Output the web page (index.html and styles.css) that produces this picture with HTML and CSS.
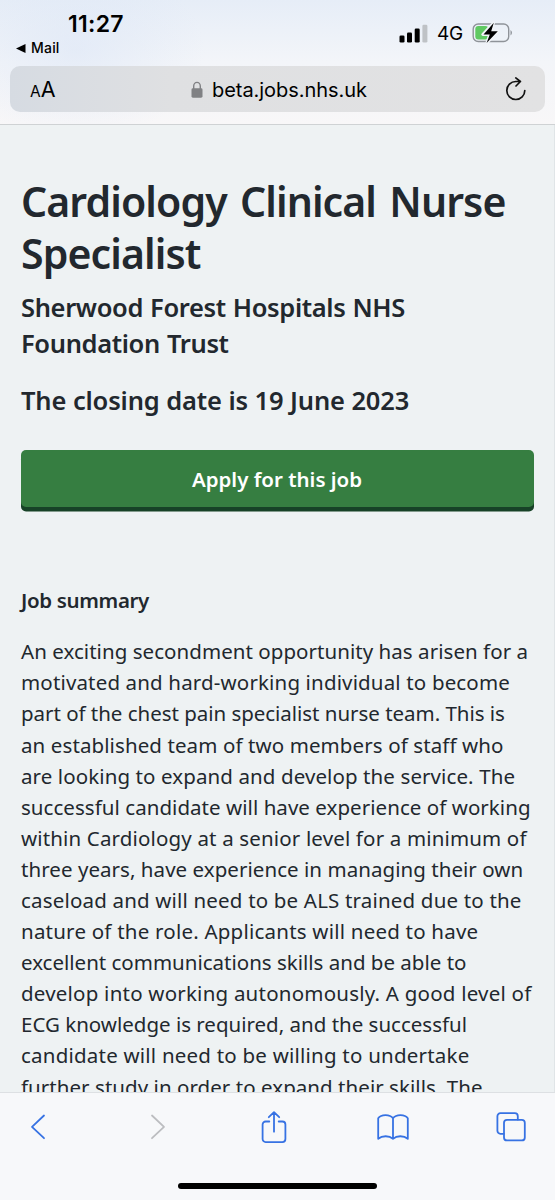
FILE: index.html
```html
<!DOCTYPE html>
<html lang="en">
<head>
<meta charset="utf-8">
<title>Cardiology Clinical Nurse Specialist</title>
<link rel="stylesheet" href="styles.css">
</head>
<body>
<div class="phone">
  <header class="chrome">
    <div class="status">
      <div class="status-left">
        <span class="clock">11:27</span>
        <span class="back-app"><svg width="10" height="9" viewBox="0 0 10 9"><path d="M0 4.5 9.5 0v9z"/></svg><span class="mail">Mail</span></span>
      </div>
      <div class="status-right">
        <svg class="signal" width="30" height="20" viewBox="0 0 30 20"><rect x="0.5" y="12.5" width="5" height="7" rx="1.3"/><rect x="8" y="9.5" width="5" height="10" rx="1.3"/><rect x="15.7" y="5.5" width="5" height="14" rx="1.3"/><rect x="23.4" y="1.8" width="5" height="17.7" rx="1.3" fill="#bfc2c6"/></svg>
        <span class="network">4G</span>
        <svg class="battery" width="42" height="24" viewBox="0 0 42 24"><rect x="1.2" y="3" width="35.5" height="17.5" rx="5" fill="none" stroke="#8f9399" stroke-width="1.4"/><path d="M38.5 9q3 2.7 0 5.6z" fill="#8f9399"/><rect x="3.3" y="5.1" width="13" height="13.3" rx="3" fill="#5fc962"/><path d="M21.5 2 10.8 13.5h7l-2.9 8.2L26 10.1h-7z" stroke="#f1f4f8" stroke-width="3" stroke-linejoin="round"/><path d="M21.8 1.8 11.5 13.5h6.3l-3.2 8.6L25.8 10.2H19.2z"/></svg>
      </div>
    </div>
    <div class="address">
      <span class="text-size"><span class="small-a">A</span>A</span>
      <div class="site"><svg width="12" height="18" viewBox="0 0 12 18"><path d="M2.7 8V5a3.3 3.6 0 0 1 6.6 0v3" fill="none" stroke="#808184" stroke-width="1.4"/><rect x="0.5" y="7.3" width="11" height="9.4" rx="1.4" fill="#808184"/></svg><span class="url">beta.jobs.nhs.uk</span></div>
      <svg class="reload" width="22" height="25" viewBox="0 0 22 25" fill="none" stroke="#111" stroke-width="1.7" stroke-linecap="round" stroke-linejoin="round"><path d="M19.8 13.5a9 9 0 1 1-9-9h4.6M10.8 0.9l4.6 3.6-4.4 4.5"/></svg>
    </div>
  </header>
  <main class="page">
    <h1 class="title">Cardiology Clinical Nurse<br>Specialist</h1>
    <h2 class="employer">Sherwood Forest Hospitals NHS<br>Foundation Trust</h2>
    <p class="closing">The closing date is 19 June 2023</p>
    <a class="apply">Apply for this job</a>
    <h3 class="section">Job summary</h3>
    <p class="summary">
      <span class="line snug">An exciting secondment opportunity has arisen for a</span>
      <span class="line wide">motivated and hard-working individual to become</span>
      <span class="line tight">part of the chest pain specialist nurse team. This is</span>
      <span class="line open">an established team of two members of staff who</span>
      <span class="line open">are looking to expand and develop the service. The</span>
      <span class="line snug">successful candidate will have experience of working</span>
      <span class="line wide">within Cardiology at a senior level for a minimum of</span>
      <span class="line snug">three years, have experience in managing their own</span>
      <span class="line wider">caseload and will need to be ALS trained due to the</span>
      <span class="line widest">nature of the role. Applicants will need to have</span>
      <span class="line">excellent communications skills and be able to</span>
      <span class="line widest">develop into working autonomously. A good level of</span>
      <span class="line">ECG knowledge is required, and the successful</span>
      <span class="line widest">candidate will need to be willing to undertake</span>
      <span class="line snug">further study in order to expand their skills. The</span>
    </p>
  </main>
  <footer class="toolbar">
    <nav class="tools">
      <svg height="26" viewBox="0 0 16 26"><path d="M14 1.5 2 12.8 14 24.2"/></svg>
      <svg class="disabled" height="26" viewBox="-2 0 16 26"><path d="M2 1.5 14 12.8 2 24.2"/></svg>
      <svg height="34" viewBox="0 0 26 34"><path d="M8.3 11.5H4.6A3 3 0 0 0 1.6 14.5v14.6a3 3 0 0 0 3 3h16.8a3 3 0 0 0 3-3V14.5a3 3 0 0 0-3-3h-3.7M13 21.7V2.4M7.8 7.2 13 2.2l5.2 5"/></svg>
      <svg height="28" viewBox="0 0 32 28"><path d="M16 5.2C13 1 4 1 1.2 5.2V25.8c4-3.4 11-3.4 14.8 0 3.8-3.4 10.8-3.4 14.8 0V5.2C28 1 19 1 16 5.2zV25.8"/></svg>
      <svg height="30" viewBox="0 0 30 30"><path d="M7.8 21.8H4.4a3 3 0 0 1-3-3V4.2a3 3 0 0 1 3-3h14.4a3 3 0 0 1 3 3v3.4"/><rect x="8" y="7.8" width="20.8" height="20.6" rx="3"/></svg>
    </nav>
    <div class="home"></div>
  </footer>
</div>
</body>
</html>
```
FILE: styles.css
```css
* { box-sizing: border-box; }
body { margin: 0; }
h1, h2, h3, p { margin: 0; }
svg { display: block; flex: none; }
.phone { width: 555px; height: 1200px; display: flex; flex-direction: column; overflow: hidden; background: #eef2f3; font-family: "Noto Sans", sans-serif; color: #22282e; }
.chrome { flex: none; height: 125px; border-bottom: 1px solid #cfd2d4; background: radial-gradient(ellipse 130px 90px at 75px 50px, rgba(220,230,246,.6), rgba(230,237,248,0)), linear-gradient(#e6edf7, #f3f5f9 50%, #f8f7f8); font-family: Inter, sans-serif; color: #000; }
.status { height: 66px; display: flex; justify-content: space-between; padding: 0 41px 0 16px; }
.clock { display: block; margin: 10px 0 0 52px; font-size: 23px; line-height: 28px; font-weight: 600; letter-spacing: .3px; }
.back-app { display: flex; align-items: center; gap: 5px; margin-top: 1px; font-size: 14px; line-height: 18px; font-weight: 500; letter-spacing: .2px; }
.status-right { display: flex; align-items: center; height: 24px; margin-top: 21px; }
.network { margin-left: 8px; width: 35px; font-size: 19px; line-height: 24px; padding-top: 2px; letter-spacing: -.2px; }
.address { display: flex; align-items: center; justify-content: space-between; height: 46px; margin: 0 10px; padding: 0 18px 0 20px; border-radius: 10px; background: linear-gradient(90deg, #d6dbe2, #dfe0e2 30%, #e2e2e3); }
.text-size { font-size: 21.5px; line-height: 28px; width: 62px; padding-top: 2px; }
.small-a { font-size: 15.5px; }
.site { display: flex; align-items: center; gap: 9px; font-size: 20px; letter-spacing: -.04px; padding-top: 1px; }
.reload { margin-left: 39px; }
.page { flex: 1; min-height: 0; overflow: hidden; padding: 50px 21px 0; border-right: 1px solid #e0e5e7; }
.title, .employer, .closing, .line { white-space: nowrap; }
.title { font-size: 41px; line-height: 52px; font-weight: 650; letter-spacing: -.9px; word-spacing: 3.5px; }
.employer, .closing { font-size: 25.5px; line-height: 36.4px; font-weight: 650; }
.employer { margin-top: 10px; letter-spacing: -.36px; word-spacing: .8px; }
.closing { margin-top: 20px; letter-spacing: -.16px; word-spacing: .2px; }
.apply { display: block; height: 57px; margin: 32px -.5px 0 -.5px; border-radius: 5px; background: #367e41; box-shadow: 0 4.5px #174227; color: #fff; font-size: 20.5px; line-height: 58px; font-weight: 600; text-align: center; }
.section { margin-top: 78px; font-size: 20.5px; line-height: 31px; font-weight: 650; letter-spacing: -.35px; }
.summary { margin-top: 20px; font-size: 20.5px; line-height: 31.1px; }
.line { display: block; }
.tight { letter-spacing: -.03px; }
.snug { letter-spacing: .05px; }
.open { letter-spacing: .1px; }
.wide { letter-spacing: .155px; }
.wider { letter-spacing: .18px; }
.widest { letter-spacing: .22px; }
.toolbar { flex: none; height: 108px; border-top: 1px solid #dde0e3; background: #f7f8fa; }
.tools { display: flex; align-items: center; justify-content: space-between; height: 68px; padding: 0 28px 0 21.5px; }
.tools svg { width: 32px; fill: none; stroke: #3772e3; stroke-width: 1.8; stroke-linecap: round; stroke-linejoin: round; }
.tools .disabled { stroke: #bcbdc0; }
.home { width: 199px; height: 6px; margin: 22px auto 0; border-radius: 3px; background: #000; }
```
